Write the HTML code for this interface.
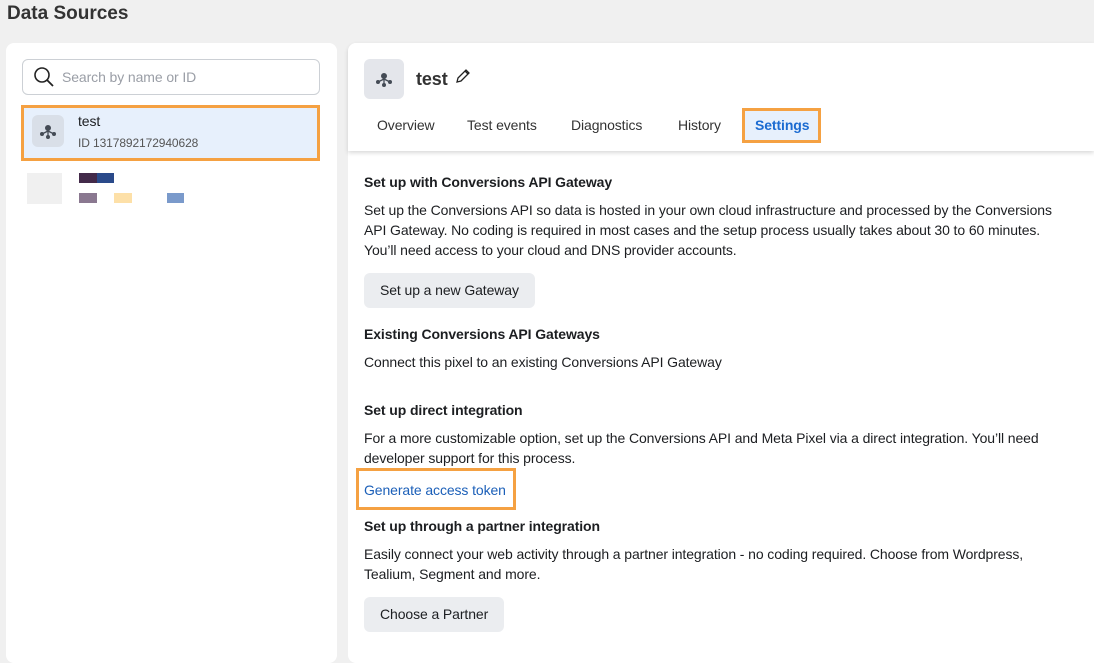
<!DOCTYPE html>
<html><head><style>
*{box-sizing:border-box;margin:0;padding:0}
body{width:1094px;height:653px;background:#f0f0f0;font-family:"Liberation Sans",sans-serif;color:#1c1e21;position:relative;overflow:hidden}
.abs{position:absolute}
h1{position:absolute;left:7px;top:3px;font-size:19px;font-weight:bold;color:#333}
.left{left:6px;top:43px;width:331px;height:620px;background:#fff;border-radius:8px}
.right{left:348px;top:43px;width:760px;height:620px;background:#fff;border-radius:8px}
.t{position:absolute;font-size:14px;color:#1c1e21;white-space:nowrap;letter-spacing:-0.1px}
.b{font-weight:bold}
.btn{position:absolute;background:#ebedf0;border-radius:6px;font-size:14px;padding:0 16px;line-height:35px;letter-spacing:-0.1px}
</style></head><body>
<h1>Data Sources</h1>
<div class="abs left"></div>
<div class="abs right"></div>
<div class="abs" style="left:22px;top:59px;width:298px;height:36px;border:1px solid #ccd0d5;border-radius:6px"></div>
<svg class="abs" style="left:33px;top:66px" width="22" height="22"><circle cx="9" cy="9" r="7" fill="none" stroke="#222" stroke-width="1.6"/><line x1="14" y1="14" x2="20" y2="20" stroke="#222" stroke-width="1.8"/></svg>
<div class="t" style="left:62px;top:69px;color:#9a9ea6">Search by name or ID</div>
<div class="abs" style="left:21px;top:105px;width:299px;height:56px;background:#e7f0fc;border:3px solid #f5a142"></div>
<div class="abs" style="left:32px;top:115px;width:32px;height:32px;background:#d9dfe8;border-radius:6px"></div>
<svg class="abs" style="left:38px;top:121px" width="20" height="20"><circle cx="10" cy="7" r="3" fill="#444b55"/><line x1="10" y1="9" x2="10" y2="15" stroke="#444b55" stroke-width="1.3"/><line x1="10" y1="10" x2="4" y2="13" stroke="#444b55" stroke-width="1.3"/><line x1="10" y1="10" x2="16" y2="13" stroke="#444b55" stroke-width="1.3"/><circle cx="4" cy="13" r="2" fill="#444b55"/><circle cx="16" cy="13" r="2" fill="#444b55"/><circle cx="10" cy="16" r="2" fill="#444b55"/></svg>
<div class="t" style="left:78px;top:113px">test</div>
<div class="t" style="left:78px;top:136px;font-size:12px;color:#555">ID 1317892172940628</div>
<div class="abs" style="left:27px;top:173px;width:35px;height:31px;background:#f0f0f0"></div>
<div class="abs" style="left:79px;top:173px;width:18px;height:10px;background:#432a4a"></div>
<div class="abs" style="left:97px;top:173px;width:17px;height:10px;background:#2a4a8a"></div>
<div class="abs" style="left:79px;top:193px;width:18px;height:10px;background:#8a7890"></div>
<div class="abs" style="left:114px;top:193px;width:18px;height:10px;background:#fde0a8"></div>
<div class="abs" style="left:167px;top:193px;width:17px;height:10px;background:#7a9acb"></div>

<div class="abs" style="left:348px;top:43px;width:746px;height:108px;box-shadow:0 2px 4px rgba(0,0,0,.15);background:#fff;border-radius:8px 0 0 0"></div>
<div class="abs" style="left:364px;top:59px;width:40px;height:40px;background:#e4e6eb;border-radius:6px"></div>
<svg class="abs" style="left:374px;top:69px" width="20" height="20"><circle cx="10" cy="7" r="3" fill="#444b55"/><line x1="10" y1="9" x2="10" y2="15" stroke="#444b55" stroke-width="1.3"/><line x1="10" y1="10" x2="4" y2="13" stroke="#444b55" stroke-width="1.3"/><line x1="10" y1="10" x2="16" y2="13" stroke="#444b55" stroke-width="1.3"/><circle cx="4" cy="13" r="2" fill="#444b55"/><circle cx="16" cy="13" r="2" fill="#444b55"/><circle cx="10" cy="16" r="2" fill="#444b55"/></svg>
<div class="t b" style="left:416px;top:69px;font-size:18px;color:#333">test</div>
<svg class="abs" style="left:455px;top:68px" width="16" height="16"><path d="M2 14 L3 10 L11 2 L14 5 L6 13 Z M10 3 L13 6" fill="none" stroke="#222" stroke-width="1.3"/></svg>
<div class="t" style="left:377px;top:117px;color:#333">Overview</div>
<div class="t" style="left:467px;top:117px;color:#333">Test events</div>
<div class="t" style="left:571px;top:117px;color:#333">Diagnostics</div>
<div class="t" style="left:678px;top:117px;color:#333">History</div>
<div class="abs" style="left:742px;top:108px;width:79px;height:35px;background:#e7f0fc;border:3px solid #f5a142"></div>
<div class="t b" style="left:755px;top:117px;color:#1b6bd1">Settings</div>

<div class="t b" style="left:364px;top:174px">Set up with Conversions API Gateway</div>
<div class="t" style="left:364px;top:200px;line-height:20px;white-space:normal;width:710px">Set up the Conversions API so data is hosted in your own cloud infrastructure and processed by the Conversions API Gateway. No coding is required in most cases and the setup process usually takes about 30 to 60 minutes. You’ll need access to your cloud and DNS provider accounts.</div>
<div class="btn" style="left:364px;top:273px">Set up a new Gateway</div>
<div class="t b" style="left:364px;top:326px">Existing Conversions API Gateways</div>
<div class="t" style="left:364px;top:354px">Connect this pixel to an existing Conversions API Gateway</div>
<div class="t b" style="left:364px;top:402px">Set up direct integration</div>
<div class="t" style="left:364px;top:428px;line-height:20px;white-space:normal;width:720px">For a more customizable option, set up the Conversions API and Meta Pixel via a direct integration. You’ll need developer support for this process.</div>
<div class="abs" style="left:356px;top:468px;width:160px;height:42px;border:3px solid #f5a142"></div>
<div class="t" style="left:364px;top:482px;color:#1b5fb8">Generate access token</div>
<div class="t b" style="left:364px;top:518px">Set up through a partner integration</div>
<div class="t" style="left:364px;top:544px;line-height:20px;white-space:normal;width:700px">Easily connect your web activity through a partner integration - no coding required. Choose from Wordpress, Tealium, Segment and more.</div>
<div class="btn" style="left:364px;top:597px">Choose a Partner</div>
</body></html>
